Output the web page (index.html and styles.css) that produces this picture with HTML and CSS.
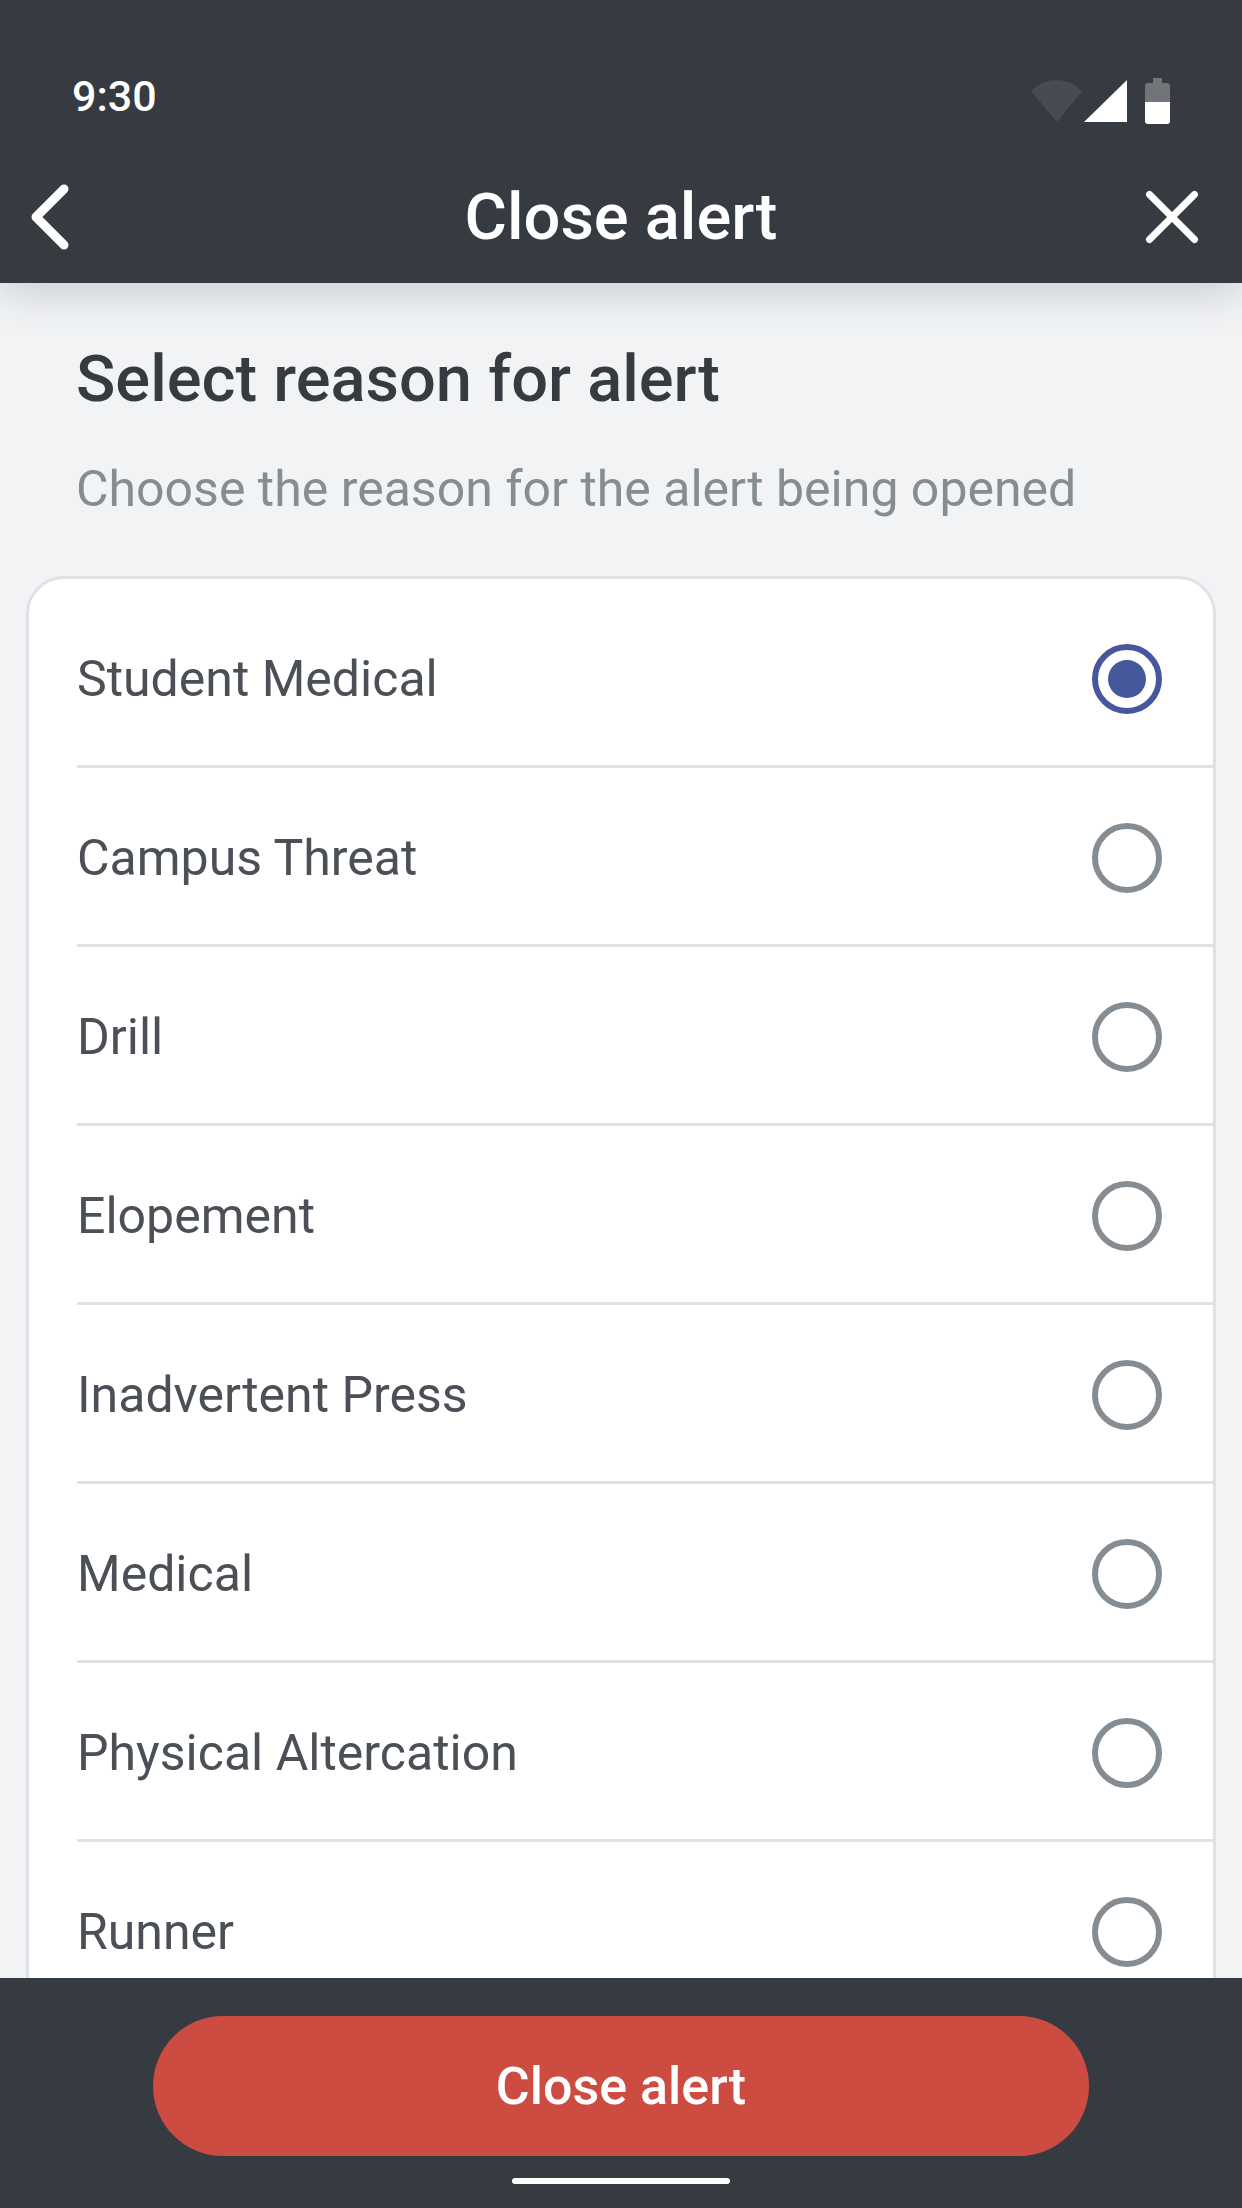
FILE: index.html
```html
<!DOCTYPE html>
<html lang="en">
<head>
    <meta charset="UTF-8">
    <meta name="viewport" content="width=device-width, initial-scale=1.0">
    <title>Close alert</title>
    <link rel="stylesheet" href="styles.css">
</head>
<body>
    <header class="header">
        <div class="status">
            <span class="time">9:30</span>
            <svg class="status-icons" width="139" height="51" viewBox="0 0 139 51" aria-hidden="true">
                <path d="M0 18Q11 7 25.500 7T51 18L26 49z" fill="#494b54"/>
                <path d="M53 49L96 7V49z" fill="#fff"/>
                <path d="M114 29V13q0-3 3-3h5V5h9v5h5q3 0 3 3v16z" fill="#727479"/>
                <path d="M114 29h25v19q0 3-3 3h-19q-3 0-3-3z" fill="#fff"/>
            </svg>
        </div>
        <nav class="nav">
            <button class="icon-btn" type="button" aria-label="Back">
                <svg width="60" height="70" viewBox="0 0 60 70"><path d="M44 7L16 35L44 63" stroke-width="9"/></svg>
            </button>
            <h1>Close alert</h1>
            <button class="icon-btn close" type="button" aria-label="Close">
                <svg width="60" height="60" viewBox="0 0 60 60"><path d="M7.500 7.500L52.500 52.500M52.500 7.500L7.500 52.500" stroke-width="7"/></svg>
            </button>
        </nav>
    </header>

    <main class="content">
        <h2>Select reason for alert</h2>
        <p class="hint">Choose the reason for the alert being opened</p>
        <form class="card" id="reasons">
            <label class="row">Student Medical<input type="radio" name="reason" checked></label>
            <label class="row">Campus Threat<input type="radio" name="reason"></label>
            <label class="row">Drill<input type="radio" name="reason"></label>
            <label class="row">Elopement<input type="radio" name="reason"></label>
            <label class="row">Inadvertent Press<input type="radio" name="reason"></label>
            <label class="row">Medical<input type="radio" name="reason"></label>
            <label class="row">Physical Altercation<input type="radio" name="reason"></label>
            <label class="row">Runner<input type="radio" name="reason"></label>
        </form>
    </main>

    <footer class="footer">
        <button class="submit" type="submit" form="reasons">Close alert</button>
        <div class="home-bar"></div>
    </footer>
</body>
</html>
```
FILE: styles.css
```css
*{
    padding: 0;
    margin: 0;
    box-sizing: border-box;
}
body{
    height: 100vh;
    display: flex;
    flex-direction: column;
    font-family: Roboto, "Liberation Sans", sans-serif;
    background-color: #f1f3f5;
    color: #4b5056;
}
h1, h2{
    font-size: 65px;
    line-height: 76px;
    font-weight: 500;
}

/* top bar */
.header{
    background-color: #363a41;
    color: white;
    box-shadow: 0 8px 40px rgba(54,58,65,.22);
    z-index: 1;
}
.status{
    display: flex;
    justify-content: space-between;
    align-items: flex-start;
    padding: 73px 72px 0;
}
.time{
    font-size: 43px;
    line-height: 46px;
    font-weight: 500;
}
.nav{
    display: flex;
    justify-content: space-between;
    align-items: center;
    height: 133px;
    margin-top: 26px;
    padding: 0 40px 0 20px;
}
.icon-btn{
    display: flex;
    width: 100px;
    background: none;
    border: none;
    cursor: pointer;
}
.icon-btn path{
    fill: none;
    stroke: white;
    stroke-linecap: round;
    stroke-linejoin: round;
}
.close{
    width: 80px;
    justify-content: flex-end;
}

/* reason list */
.content{
    flex: 1;
    min-height: 0;
    overflow-y: auto;
    scrollbar-width: none;
    padding: 58px 26px 0;
}
.content h2{
    color: #363a41;
    padding-left: 50px;
}
.hint{
    padding-left: 50px;
    margin: 42px 0 57px;
    font-size: 50px;
    line-height: 60px;
    color: #858d92;
}
.card{
    background-color: white;
    border: 3px solid #dfe1e7;
    border-radius: 38px;
    padding: 10px 0 0 48px;
}
.row{
    display: flex;
    justify-content: space-between;
    align-items: center;
    height: 179px;
    padding: 3px 51px 0 0;
    border-bottom: 3px solid #dfe1e7;
    font-size: 50px;
    cursor: pointer;
}
.row:last-child{
    border-bottom-color: transparent;
}
.row input{
    appearance: none;
    width: 70px;
    height: 70px;
    border: 6px solid #858d92;
    border-radius: 50%;
}
.row input:checked{
    border-color: #46579b;
    background: #46579b content-box;
    padding: 10px;
}

/* bottom bar */
.footer{
    display: flex;
    flex-direction: column;
    align-items: center;
    gap: 22px;
    padding: 38px 153px 24px;
    background-color: #363a41;
}
.submit{
    width: 100%;
    height: 140px;
    border: none;
    border-radius: 70px;
    background-color: #cd4c41;
    color: white;
    font-family: inherit;
    font-size: 52px;
    font-weight: 500;
    cursor: pointer;
}
.home-bar{
    width: 218px;
    height: 6px;
    border-radius: 3px;
    background-color: white;
}
```
